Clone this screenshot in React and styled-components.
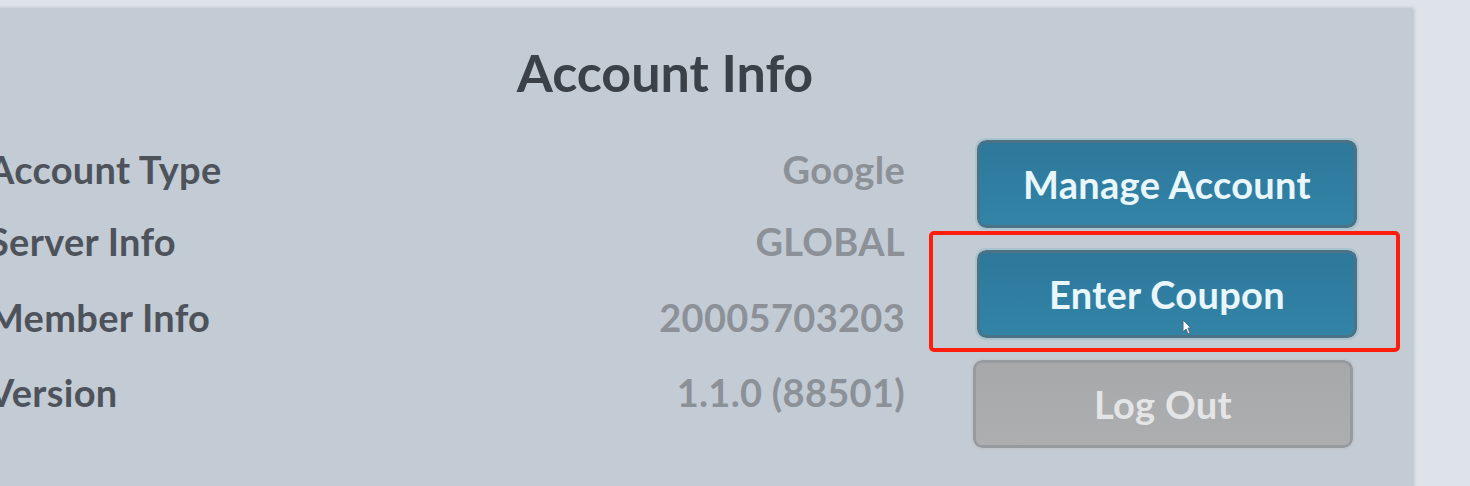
import styled, { createGlobalStyle } from "styled-components";

const GlobalStyle = createGlobalStyle`
  html, body {
    margin: 0;
    padding: 0;
    background: #dce2e8;
  }
  body {
    font-family: Lato, "Noto Sans", sans-serif;
  }
`;

const Page = styled.div`
  width: 1470px;
  height: 486px;
  overflow: hidden;
  background: #dde3e9;
`;

const Panel = styled.section`
  margin: 8px 0 0 -82px;
  width: 1494px;
  height: 500px;
  box-sizing: border-box;
  padding: 0 55px 0 72px;
  background: #c3ccd5;
  box-shadow: 2px 0 3px rgba(120, 130, 140, 0.35);
`;

const Title = styled.h2`
  margin: 0 0 0 -72px;
  width: 1494px;
  padding-top: 30px;
  text-align: center;
  font-size: 52px;
  line-height: 68px;
  font-weight: 700;
  color: #3b4148;
`;

const Body = styled.div`
  display: flex;
  margin-top: 34px;
`;

const InfoList = styled.div`
  flex: 1;
  display: grid;
  grid-template-columns: auto 1fr;
  grid-template-rows: 70px 73px 80px 70px;
  padding-right: 72px;
  margin-top: -6px;
  margin-left: -2px;
`;

const Label = styled.div`
  display: flex;
  align-items: center;
  font-size: 38px;
  letter-spacing: 0.3px;
  font-weight: 700;
  color: #4e535b;
`;

const Value = styled.div`
  display: flex;
  align-items: center;
  justify-content: flex-end;
  font-size: 38px;
  letter-spacing: 0.3px;
  font-weight: 700;
  color: #8c9198;
`;

const ButtonColumn = styled.div`
  width: 380px;
  display: flex;
  flex-direction: column;
  gap: 22px;
`;

const Button = styled.div`
  position: relative;
  width: 380px;
  height: 88px;
  box-sizing: border-box;
  margin-left: ${(p) => p.$shift || 0}px;
  display: flex;
  align-items: center;
  justify-content: center;
  border-radius: 9px;
  font-size: 38px;
  letter-spacing: 0.3px;
  font-weight: 700;
  border: 3px solid ${(p) => (p.$disabled ? "#979b9f" : "#4c7286")};
  outline: 2px solid ${(p) => (p.$disabled ? "#c0c6cc" : "#a9c3cf")};
  background: ${(p) =>
    p.$disabled
      ? "linear-gradient(#a6a8aa, #acaeaf)"
      : "linear-gradient(#2d789b, #3284a7)"};
  color: ${(p) => (p.$disabled ? "#e4e5e6" : "#e9f7fd")};
`;

const Highlight = styled.div`
  position: absolute;
  top: -22px;
  bottom: -17px;
  left: -51px;
  right: -46px;
  border: 4px solid #ff1d0e;
  border-radius: 5px;
  pointer-events: none;
`;

const Cursor = styled.svg`
  position: absolute;
  left: 202px;
  top: 66px;
`;

const rows = [
  ["Account Type", "Google"],
  ["Server Info", "GLOBAL"],
  ["Member Info", "20005703203"],
  ["Version", "1.1.0 (88501)"],
];

export default function App() {
  return (
    <Page>
      <GlobalStyle />
      <Panel>
        <Title>Account Info</Title>
        <Body>
          <InfoList>
            {rows.map(([label, value]) => [
              <Label key={label}>{label}</Label>,
              <Value key={value}>{value}</Value>,
            ])}
          </InfoList>
          <ButtonColumn>
            <Button>Manage Account</Button>
            <Button>
              Enter Coupon
              <Highlight />
              <Cursor width="10" height="16" viewBox="0 0 10 16">
                <path d="M1 1 L1 13 L4 10 L6 15 L8 14 L6 9 L9 9 Z" fill="#f4fbff" stroke="#4a6b7c" strokeWidth="1" />
              </Cursor>
            </Button>
            <Button $disabled $shift={-4}>Log Out</Button>
          </ButtonColumn>
        </Body>
      </Panel>
    </Page>
  );
}
